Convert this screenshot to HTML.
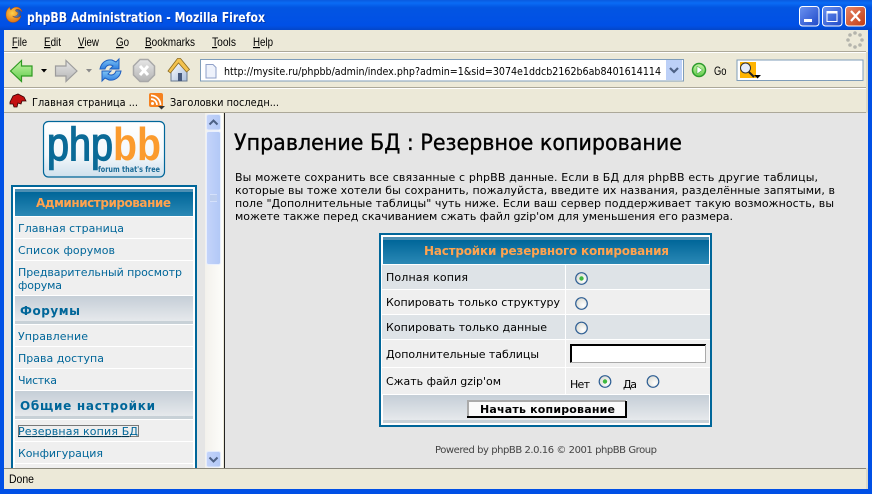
<!DOCTYPE html>
<html><head><meta charset="utf-8"><title>phpBB Administration - Mozilla Firefox</title>
<style>
html,body{margin:0;padding:0;background:#ece9d8;overflow:hidden}
svg{display:block}
text{font-family:"DejaVu Sans",sans-serif;white-space:pre}
.s{font-family:"Liberation Sans",sans-serif;font-size:12px;fill:#000}
.d{font-size:11px;fill:#000}
.l{font-size:11px;fill:#006699}
.c{font-size:12px;font-weight:bold;fill:#006699}
.o{font-size:12px;font-weight:bold;fill:#ffa34f}
</style></head><body>
<svg width="872" height="494" viewBox="0 0 872 494" xmlns="http://www.w3.org/2000/svg">
<defs>
<linearGradient id="tb" x1="0" y1="0" x2="0" y2="1"><stop offset="0" stop-color="#0a5ae0"/><stop offset=".1" stop-color="#0a6cf5"/><stop offset=".25" stop-color="#0355e2"/><stop offset=".85" stop-color="#0050e6"/><stop offset="1" stop-color="#0346c8"/></linearGradient>
<linearGradient id="hd" x1="0" y1="0" x2="0" y2="1"><stop offset="0" stop-color="#006699"/><stop offset="1" stop-color="#2a88b5"/></linearGradient>
<linearGradient id="cat" x1="0" y1="0" x2="0" y2="1"><stop offset="0" stop-color="#c5ced7"/><stop offset="1" stop-color="#e6e9ec"/></linearGradient>
<linearGradient id="sb" x1="0" y1="0" x2="1" y2="0"><stop offset="0" stop-color="#c4d4fa"/><stop offset="1" stop-color="#b2c8f6"/></linearGradient>
<linearGradient id="tr" x1="0" y1="0" x2="1" y2="0"><stop offset="0" stop-color="#f3f1ec"/><stop offset="1" stop-color="#fdfdfa"/></linearGradient>
<linearGradient id="bl" x1="0" y1="0" x2="1" y2="1"><stop offset="0" stop-color="#6b93f0"/><stop offset="1" stop-color="#1f48c8"/></linearGradient>
<linearGradient id="rd" x1="0" y1="0" x2="1" y2="1"><stop offset="0" stop-color="#e8876a"/><stop offset="1" stop-color="#c23a12"/></linearGradient>
<linearGradient id="lg" x1="0" y1="0" x2="0" y2="1"><stop offset="0" stop-color="#ffffff"/><stop offset=".6" stop-color="#f4f8fb"/><stop offset="1" stop-color="#cfe0ec"/></linearGradient>
<linearGradient id="grn" x1="0" y1="0" x2="0" y2="1"><stop offset="0" stop-color="#c8f5a8"/><stop offset="1" stop-color="#5ecb4a"/></linearGradient>
<linearGradient id="gry" x1="0" y1="0" x2="0" y2="1"><stop offset="0" stop-color="#e6e6e6"/><stop offset="1" stop-color="#b4b4b4"/></linearGradient>
<linearGradient id="rld" x1="0" y1="0" x2="0" y2="1"><stop offset="0" stop-color="#7fc4f5"/><stop offset="1" stop-color="#2f7fe0"/></linearGradient>
<linearGradient id="hm" x1="0" y1="0" x2="1" y2="1"><stop offset="0" stop-color="#ffffff"/><stop offset="1" stop-color="#a9bedc"/></linearGradient>
<radialGradient id="rad" cx=".65" cy=".65" r=".7"><stop offset="0" stop-color="#ffffff"/><stop offset="1" stop-color="#dcdcd4"/></radialGradient>
<radialGradient id="ff" cx=".4" cy=".4" r=".7"><stop offset="0" stop-color="#ffd24a"/><stop offset="1" stop-color="#d9600c"/></radialGradient>
<radialGradient id="gb" cx=".5" cy=".45" r=".6"><stop offset="0" stop-color="#6f9fd8"/><stop offset="1" stop-color="#1d3f80"/></radialGradient>
</defs>

<!-- window frame -->
<rect width="872" height="494" fill="#0050e6"/>
<rect width="872" height="30" fill="url(#tb)"/>
<rect x="4" y="30" width="864" height="459" fill="#ece9d8"/>
<rect x="866" y="30" width="2" height="459" fill="#dcd9c8"/>

<!-- title -->
<circle cx="14" cy="15" r="7" fill="url(#gb)"/>
<path d="M6 14c0-3 2-6 4-7-.500 1.500 0 2.500 1 3 1-1.500 3-3 6-3 3 .500 5 3 5 5-1.500-2-4-3.500-6-2.500-1.500 1 0 2.500 2 3 0 3-3 4.500-5.500 3.500 2 2.500 6 2.500 8.500-.500-.500 4-4 7-8 7-4 0-7.500-3.500-7-8.500z" fill="url(#ff)" stroke="#a8480a" stroke-width=".4"/>
<text x="27" y="22" font-size="13" font-weight="bold" fill="#0a2a8a" textLength="238" lengthAdjust="spacingAndGlyphs" opacity=".6" transform="translate(1 1)">phpBB Administration - Mozilla Firefox</text>
<text x="27" y="22" font-size="13" font-weight="bold" fill="#fff" textLength="238" lengthAdjust="spacingAndGlyphs">phpBB Administration - Mozilla Firefox</text>

<rect x="799.500" y="6.500" width="19.500" height="19.500" rx="3" fill="url(#bl)" stroke="#fff"/>
<rect x="804" y="19" width="8" height="3" fill="#fff"/>
<rect x="822.500" y="6.500" width="19.500" height="19.500" rx="3" fill="url(#bl)" stroke="#fff"/>
<rect x="827" y="11.500" width="10" height="10" fill="none" stroke="#fff"/><rect x="827" y="11" width="10" height="2.500" fill="#fff"/>
<rect x="845.500" y="6.500" width="20" height="19.500" rx="3" fill="url(#rd)" stroke="#fff"/>
<path d="M851 11l9 10M860 11l-9 10" stroke="#fff" stroke-width="2.200" fill="none"/>

<!-- menu -->
<rect x="4" y="30" width="864" height="22" fill="#ece9d8"/>
<rect x="4" y="51" width="862" height="1" fill="#aca899"/>
<rect x="4" y="52" width="862" height="1" fill="#fff"/>
<g>
<text class="s" x="12" y="46" textLength="15" lengthAdjust="spacingAndGlyphs"><tspan text-decoration="underline">F</tspan>ile</text>
<text class="s" x="44" y="46" textLength="17" lengthAdjust="spacingAndGlyphs"><tspan text-decoration="underline">E</tspan>dit</text>
<text class="s" x="78" y="46" textLength="21" lengthAdjust="spacingAndGlyphs"><tspan text-decoration="underline">V</tspan>iew</text>
<text class="s" x="116" y="46" textLength="13" lengthAdjust="spacingAndGlyphs"><tspan text-decoration="underline">G</tspan>o</text>
<text class="s" x="145" y="46" textLength="50" lengthAdjust="spacingAndGlyphs"><tspan text-decoration="underline">B</tspan>ookmarks</text>
<text class="s" x="212" y="46" textLength="24" lengthAdjust="spacingAndGlyphs"><tspan text-decoration="underline">T</tspan>ools</text>
<text class="s" x="253" y="46" textLength="20" lengthAdjust="spacingAndGlyphs"><tspan text-decoration="underline">H</tspan>elp</text>
</g>
<g fill="#b4b4ac"><circle cx="855" cy="33" r="1.800"/><circle cx="860" cy="35" r="1.800"/><circle cx="862" cy="40" r="1.800"/><circle cx="860" cy="45" r="1.800"/><circle cx="855" cy="47" r="1.800"/><circle cx="850" cy="45" r="1.800"/><circle cx="848" cy="40" r="1.800"/><circle cx="850" cy="35" r="1.800"/></g>

<!-- nav -->
<rect x="4" y="87" width="862" height="1" fill="#aca899"/>
<rect x="4" y="88" width="862" height="1" fill="#fff"/>
<path d="M10.500 71L21.500 60.500V66H32V76H21.500V81.500Z" fill="url(#grn)" stroke="#2f9a22" stroke-width="1.200"/>
<path d="M41 69h6l-3 3.500z" fill="#000"/>
<path d="M77 71L66 60.500V66H55.500V76H66V81.500Z" fill="url(#gry)" stroke="#9c9c9c" stroke-width="1.200"/>
<path d="M86 69h6l-3 3.500z" fill="#8a8a8a"/>
<path d="M100 69c1-6 6-10 12-9l4 2 3-3v10h-9l3-3c-3-2-7-1-8 3z" fill="url(#rld)" stroke="#1f5fc0"/>
<path d="M121 71c-1 6-6 10-12 9l-4-2-3 3V71h9l-3 3c3 2 7 1 8-3z" fill="url(#rld)" stroke="#1f5fc0"/>
<path d="M140 59.500h8l6.500 6.500v9l-6.500 6.500h-8l-6.500-6.500v-9z" fill="url(#gry)" stroke="#a8a8a8" stroke-width="1.500"/>
<path d="M140 66l8 9M148 66l-8 9" stroke="#fff" stroke-width="3"/>
<path d="M171 68l8-6 8 6v13h-16z" fill="url(#hm)" stroke="#6a7a90"/>
<path d="M168 71l9.500-12.500h3l9 11-3 2.500-8-9-8 10z" fill="#f3c24e" stroke="#8a6a20" stroke-width=".8"/>
<rect x="178" y="73" width="4" height="8" fill="#46597c"/>

<rect x="200.500" y="59.500" width="483" height="21.500" fill="#fff" stroke="#7f9db9"/>
<path d="M206 64.500h7l3 3v10.500h-10z" fill="#eef2fb" stroke="#8fa0c8"/>
<text x="224" y="75" font-size="11" fill="#000" textLength="437" lengthAdjust="spacingAndGlyphs">http://mysite.ru/phpbb/admin/index.php?admin=1&amp;sid=3074e1ddcb2162b6ab8401614114</text>
<rect x="666" y="60" width="16" height="20" fill="#bcd0f7"/>
<path d="M670 68l4 4 4-4" fill="none" stroke="#4d6185" stroke-width="2.200"/>
<circle cx="699" cy="70" r="6.500" fill="url(#grn)" stroke="#2c9a2c" stroke-width="1.500"/>
<path d="M697 66l5.500 4-5.500 4z" fill="#fff" stroke="#2c9a2c" stroke-width=".5"/>
<text class="s" x="714" y="75" textLength="12.500" lengthAdjust="spacingAndGlyphs">Go</text>
<rect x="737" y="60" width="126" height="20.500" fill="#fff" stroke="#7f9db9"/>
<rect x="740" y="62" width="16" height="16" fill="#ffb400"/>
<circle cx="745.500" cy="68" r="5" fill="#e6ecf8" stroke="#333"/>
<path d="M749 72l5 5" stroke="#222" stroke-width="2"/>
<path d="M754 75h7l-3.500 3.500z" fill="#000"/>

<!-- bookmarks -->
<rect x="4" y="89" width="862" height="24" fill="#ece9d8"/>
<rect x="4" y="112" width="862" height="1" fill="#aca899"/>
<path d="M10 102l3-6 5-2 6 3 2 4-4 0-1 3-3-1-1 4-3 0-1-3-3 0z" fill="#c41010" stroke="#300" stroke-width=".8"/>
<text x="32" y="106" font-size="11" fill="#000" textLength="106" lengthAdjust="spacingAndGlyphs">Главная страница ...</text>
<rect x="149" y="93" width="14" height="14" rx="2" fill="#f58220"/>
<circle cx="152.500" cy="103.500" r="1.500" fill="#fff"/>
<path d="M151 99a6 6 0 0 1 6 6M151 95.500a9.500 9.500 0 0 1 9.500 9.500" fill="none" stroke="#fff" stroke-width="1.700"/>
<path d="M158 106h7l-3.500 3.500z" fill="#333"/>
<text x="170" y="106" font-size="11" fill="#000" textLength="109" lengthAdjust="spacingAndGlyphs">Заголовки последн...</text>

<!-- left frame -->
<rect x="4" y="113" width="201" height="355" fill="#e5e5e5"/>
<rect x="205" y="113" width="18" height="355" fill="url(#tr)"/>
<rect x="224" y="113" width="1" height="355" fill="#222"/>
<rect x="225" y="113" width="643" height="355" fill="#e5e5e5"/>

<!-- scrollbar -->
<rect x="206.500" y="114.500" width="14" height="15.500" rx="2" fill="url(#sb)" stroke="#e4ecfc"/>
<path d="M209.500 124.500l4-4 4 4" fill="none" stroke="#4d6185" stroke-width="2"/>
<rect x="206.500" y="131.500" width="14" height="133" rx="2" fill="url(#sb)" stroke="#eaf0fd"/>
<path d="M210 195h7M210 197h7M210 199h7M210 201h7" stroke="#eef3fe"/>
<path d="M210 196h7M210 198h7M210 200h7" stroke="#8ca8e0"/>
<rect x="206.500" y="451.500" width="14" height="15.500" rx="2" fill="url(#sb)" stroke="#e4ecfc"/>
<path d="M209.500 457.500l4 4 4-4" fill="none" stroke="#4d6185" stroke-width="2"/>

<!-- logo -->
<rect x="43.500" y="121.500" width="121" height="55.500" rx="5" fill="url(#lg)" stroke="#006699" stroke-width="1.200"/>
<text x="47" y="160" font-size="46" fill="#0a6a97" stroke="#0a6a97" stroke-width="1.400" textLength="66" lengthAdjust="spacingAndGlyphs" style="font-family:'Liberation Sans',sans-serif">php</text>
<text x="113" y="160" font-size="46" font-weight="bold" fill="#fb9b2e" textLength="48" lengthAdjust="spacingAndGlyphs" style="font-family:'Liberation Sans',sans-serif">bb</text>
<text x="98" y="172" font-size="8" font-weight="bold" fill="#1a6a96" textLength="62" lengthAdjust="spacingAndGlyphs">forum that's free</text>

<!-- menu box -->
<rect x="11" y="185" width="186" height="283" fill="#006699"/>
<rect x="13" y="187" width="182" height="281" fill="#fff"/>
<rect x="15" y="189" width="178" height="3" fill="#4c8fb3"/>
<rect x="15" y="192" width="178" height="24" fill="url(#hd)"/>
<text class="o" x="36" y="207" textLength="135">Администрирование</text>
<g fill="#efefef">
<rect x="15" y="217" width="178" height="21"/><rect x="15" y="239" width="178" height="21"/><rect x="15" y="261" width="178" height="34"/>
<rect x="15" y="325" width="178" height="21"/><rect x="15" y="347" width="178" height="21"/><rect x="15" y="369" width="178" height="21"/>
<rect x="15" y="420" width="178" height="21"/><rect x="15" y="442" width="178" height="21"/><rect x="15" y="464" width="178" height="4"/>
</g>
<rect x="15" y="296" width="178" height="25" fill="url(#cat)"/><rect x="15" y="321" width="178" height="3" fill="#c8d1d7"/>
<rect x="15" y="391" width="178" height="25" fill="url(#cat)"/><rect x="15" y="416" width="178" height="3" fill="#c8d1d7"/>
<text class="l" x="18" y="232" textLength="106">Главная страница</text>
<text class="l" x="18" y="254" textLength="97">Список форумов</text>
<text class="l" x="18" y="276" textLength="164">Предварительный просмотр</text>
<text class="l" x="18" y="289" textLength="44">форума</text>
<text class="c" x="20" y="315" textLength="60">Форумы</text>
<text class="l" x="18" y="340" textLength="70">Управление</text>
<text class="l" x="18" y="362" textLength="86">Права доступа</text>
<text class="l" x="18" y="384" textLength="39">Чистка</text>
<text class="c" x="20" y="410" textLength="135">Общие настройки</text>
<text class="l" x="18" y="435" textLength="120" text-decoration="underline">Резервная копия БД</text>
<rect x="18.500" y="425.500" width="120" height="11" fill="none" stroke="#000" stroke-dasharray="1 1"/>
<text class="l" x="18" y="457" textLength="85">Конфигурация</text>

<!-- main -->
<text x="234" y="150" font-size="22" fill="#000" stroke="#000" stroke-width=".35" textLength="448" lengthAdjust="spacingAndGlyphs">Управление БД : Резервное копирование</text>
<text class="d" x="235" y="181" textLength="583">Вы можете сохранить все связанные с phpBB данные. Если в БД для phpBB есть другие таблицы,</text>
<text class="d" x="235" y="194" textLength="600">которые вы тоже хотели бы сохранить, пожалуйста, введите их названия, разделённые запятыми, в</text>
<text class="d" x="235" y="207" textLength="599">поле "Дополнительные таблицы" чуть ниже. Если ваш сервер поддерживает такую возможность, вы</text>
<text class="d" x="235" y="220" textLength="498">можете также перед скачиванием сжать файл gzip'ом для уменьшения его размера.</text>

<!-- table -->
<rect x="379" y="233" width="333" height="194" fill="#006699"/>
<rect x="381" y="235" width="329" height="190" fill="#fff"/>
<rect x="383" y="237" width="326" height="3" fill="#4c8fb3"/>
<rect x="383" y="240" width="326" height="24" fill="url(#hd)"/>
<text class="o" x="424" y="255" textLength="245">Настройки резервного копирования</text>
<rect x="382" y="265" width="183" height="24" fill="#dee3e7"/><rect x="566" y="265" width="144" height="24" fill="#dee3e7"/>
<rect x="382" y="290" width="183" height="24" fill="#efefef"/><rect x="566" y="290" width="144" height="24" fill="#efefef"/>
<rect x="382" y="315" width="183" height="24" fill="#dee3e7"/><rect x="566" y="315" width="144" height="24" fill="#dee3e7"/>
<rect x="382" y="340" width="183" height="27" fill="#efefef"/><rect x="566" y="340" width="144" height="27" fill="#efefef"/>
<rect x="382" y="368" width="183" height="26" fill="#efefef"/><rect x="566" y="368" width="144" height="26" fill="#efefef"/>
<rect x="383" y="395" width="326" height="25" fill="url(#cat)"/><rect x="383" y="420" width="326" height="3" fill="#c8d1d7"/>
<text class="d" x="386" y="281" textLength="82">Полная копия</text>
<text class="d" x="386" y="306" textLength="174">Копировать только структуру</text>
<text class="d" x="386" y="331" textLength="161">Копировать только данные</text>
<text class="d" x="386" y="358" textLength="153">Дополнительные таблицы</text>
<text class="d" x="386" y="385" textLength="115">Сжать файл gzip'ом</text>
<g fill="url(#rad)" stroke="#2f5f94" stroke-width="1.200">
<circle cx="581.500" cy="278.500" r="5.800"/><circle cx="581.500" cy="303.500" r="5.800"/><circle cx="581.500" cy="328" r="5.800"/>
<circle cx="605" cy="381.500" r="5.800"/><circle cx="653" cy="381.500" r="5.800"/>
</g>
<circle cx="581.500" cy="278.500" r="2.200" fill="#3fb83f"/><circle cx="605" cy="381.500" r="2.200" fill="#3fb83f"/>
<rect x="570" y="344" width="136" height="19" fill="#fff"/>
<path d="M571 363V345H706" fill="none" stroke="#000" stroke-width="2"/>
<path d="M570.500 362.500H705.500V345" fill="none" stroke="#aaa"/>
<text class="d" x="570" y="388" textLength="20">Нет</text>
<text class="d" x="623" y="388" textLength="14">Да</text>
<rect x="467" y="400" width="160" height="18" fill="#fafafa"/>
<path d="M468 418V401H626" fill="none" stroke="#aaa" stroke-width="2"/>
<path d="M467 417H626V401" fill="none" stroke="#000" stroke-width="2"/>
<text x="480" y="413" font-size="11" font-weight="bold" fill="#000" textLength="135">Начать копирование</text>
<text x="435" y="453" font-size="10" fill="#444" textLength="222">Powered by phpBB 2.0.16 © 2001 phpBB Group</text>

<!-- status -->
<rect x="4" y="468" width="862" height="1" fill="#8a887c"/>
<rect x="4" y="469" width="862" height="20" fill="#ece9d8"/>
<text class="s" x="9" y="483" textLength="25" lengthAdjust="spacingAndGlyphs">Done</text>
</svg>
</body></html>
